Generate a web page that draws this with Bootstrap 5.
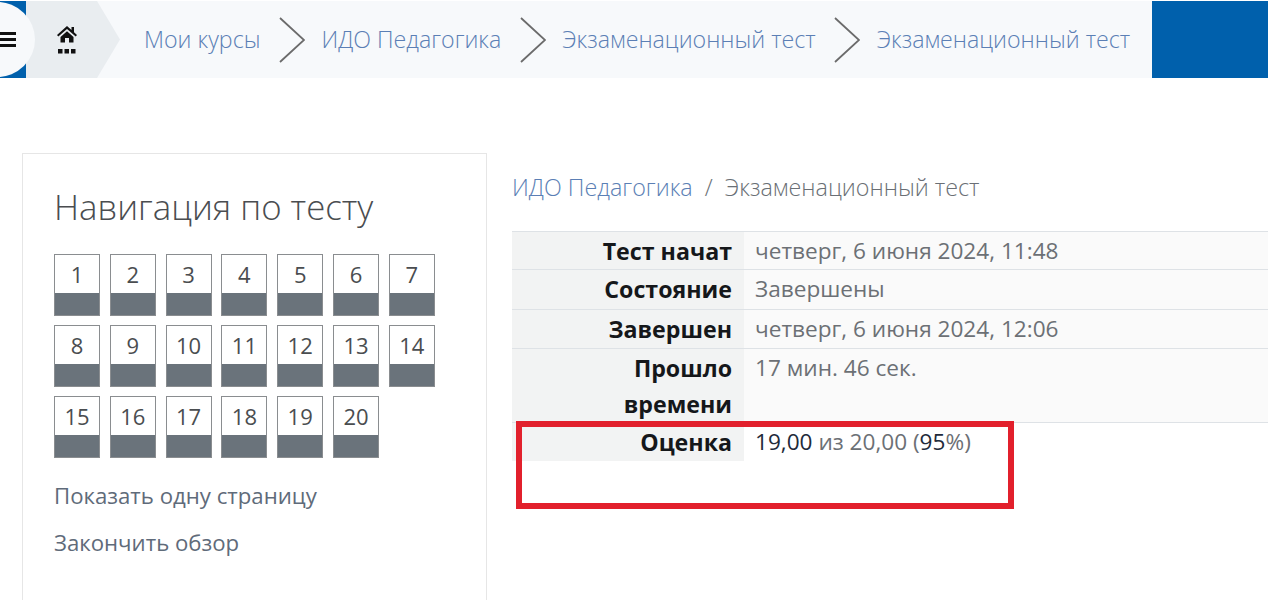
<!DOCTYPE html>
<html lang="ru">
<head>
<meta charset="utf-8">
<title>Экзаменационный тест</title>
<link href="https://cdn.jsdelivr.net/npm/bootstrap@5.3.0/dist/css/bootstrap.min.css" rel="stylesheet">
<style>
html,body{height:600px;overflow:hidden}
body{font-family:"Open Sans","Noto Sans",sans-serif;color:#373a3c;background:#fff}
.topbar{height:77px;margin-top:1px;background:#f7f9fb}
.topbar-end{width:116px;background:#0060ac;flex:none}
.menu-disc{width:26px;flex:none;background:#0060ac;position:relative;overflow:visible}
.menu-disc-inner{position:absolute;z-index:2;left:-41px;top:1px;width:76px;height:75px;border-radius:50%;background:#f7f9fb;display:flex;align-items:center;justify-content:flex-end;padding-right:19px}
.menu-icon{width:16px;height:15px}
.home-tab{width:94px;flex:none;padding-left:31px;background:#e9edf0;clip-path:polygon(0 0,71px 0,94px 50%,71px 100%,0 100%)}
.crumb-link{font-size:23.200px;font-weight:300;color:#5b7fb5;text-decoration:none;white-space:nowrap}
.chev{flex:none;margin-left:1px;margin-right:-1px}
.crumbs{padding-left:24px;gap:17.500px;min-width:0;overflow:hidden}
.content-wrap{padding:75px 0 0 22px;gap:25px}
.quiz-nav{width:465px;height:460px;flex:none;border:1px solid #e6e6e6;padding:30px 31px}
.quiz-title{font-size:34.800px;font-weight:300;line-height:46px;color:#4a4d50;margin:0 0 24px}
.qn-grid{display:grid;grid-template-columns:repeat(7,46px);column-gap:9.800px;row-gap:9px;margin-bottom:23px}
.qn-btn{height:62px;border:1px solid #8a8d90;background:#fff;font-size:22px;color:#4a4d50;display:flex;flex-direction:column;text-align:center}
.qn-btn span{height:38px;line-height:38px}
.qn-btn i{display:block;flex:1;background:#6a737b}
.nav-link-lite{display:block;font-size:22.200px;line-height:30px;color:#5f6b7a;text-decoration:none;margin-bottom:17px;font-weight:400}
.main-col{flex:1;min-width:0;position:relative}
.path-line{font-size:23.300px;line-height:30px;font-weight:300;margin:19px 0 29px;white-space:nowrap}
.path-line a{color:#5b7fb5;text-decoration:none}
.path-line span{color:#6a6f75}
.review{width:100%;border-collapse:collapse;table-layout:fixed}
.review tr.ruled{border-top:1px solid #dee2e6}
.review tr.last-ruled{border-bottom:1px solid #dee2e6}
.review th{width:232px;background:#f2f3f3;text-align:right;font-size:23.200px;font-weight:700;color:#15171a;padding:1px 12px 1px 40px;line-height:36px;vertical-align:top}
.review td{background:#fafafa;padding:1px 11px;font-size:22.600px;line-height:36px;color:#6c7075;vertical-align:top;font-weight:400}
.review tr.tight th,.review tr.tight td{padding-bottom:0}
.review tr.roomy th,.review tr.roomy td{padding-bottom:2px}
.review tr.plain td{background:#fff}
.review b{font-weight:400;color:#212a3a}
.red-frame{position:absolute;left:4px;top:268px;width:498px;height:88px;border:6px solid #e2202c;pointer-events:none}
</style>
</head>
<body>
<div class="topbar d-flex align-items-stretch">
  <div class="menu-disc"><div class="menu-disc-inner"><svg class="menu-icon" viewBox="0 0 16 15"><rect y="0" width="16" height="3" fill="#111"/><rect y="6" width="16" height="3" fill="#111"/><rect y="12" width="16" height="3" fill="#111"/></svg></div></div>
  <div class="home-tab d-flex align-items-center">
    <svg width="20" height="28" viewBox="0 0 20 28"><path d="M10 0 0 9l1.300 1.500L10 3l8.700 7.500L20 9l-3-2.700V1h-2.500v3.100z" fill="#111"/><path d="M3.500 11 10 5.200 16.500 11v5.500H12V12H8v4.500H3.500z" fill="#111"/><rect x="1" y="23" width="4.500" height="4.500" fill="#111"/><rect x="7.500" y="23" width="4.500" height="4.500" fill="#111"/><rect x="14" y="23" width="4.500" height="4.500" fill="#111"/></svg>
  </div>
  <div class="crumbs d-flex align-items-center flex-grow-1">
    <a class="crumb-link" href="#">Мои курсы</a>
    <svg class="chev" width="26" height="46" viewBox="0 0 26 46"><path d="M1 1l24 22L1 45" fill="none" stroke="#6b6b6b" stroke-width="1.800"/></svg>
    <a class="crumb-link" href="#">ИДО Педагогика</a>
    <svg class="chev" width="26" height="46" viewBox="0 0 26 46"><path d="M1 1l24 22L1 45" fill="none" stroke="#6b6b6b" stroke-width="1.800"/></svg>
    <a class="crumb-link" href="#">Экзаменационный тест</a>
    <svg class="chev" width="26" height="46" viewBox="0 0 26 46"><path d="M1 1l24 22L1 45" fill="none" stroke="#6b6b6b" stroke-width="1.800"/></svg>
    <a class="crumb-link" href="#">Экзаменационный тест</a>
  </div>
  <div class="topbar-end"></div>
</div>
<div class="content-wrap d-flex">
  <aside class="quiz-nav">
    <h2 class="quiz-title">Навигация по тесту</h2>
    <div class="qn-grid">
      <div class="qn-btn"><span>1</span><i></i></div>
      <div class="qn-btn"><span>2</span><i></i></div>
      <div class="qn-btn"><span>3</span><i></i></div>
      <div class="qn-btn"><span>4</span><i></i></div>
      <div class="qn-btn"><span>5</span><i></i></div>
      <div class="qn-btn"><span>6</span><i></i></div>
      <div class="qn-btn"><span>7</span><i></i></div>
      <div class="qn-btn"><span>8</span><i></i></div>
      <div class="qn-btn"><span>9</span><i></i></div>
      <div class="qn-btn"><span>10</span><i></i></div>
      <div class="qn-btn"><span>11</span><i></i></div>
      <div class="qn-btn"><span>12</span><i></i></div>
      <div class="qn-btn"><span>13</span><i></i></div>
      <div class="qn-btn"><span>14</span><i></i></div>
      <div class="qn-btn"><span>15</span><i></i></div>
      <div class="qn-btn"><span>16</span><i></i></div>
      <div class="qn-btn"><span>17</span><i></i></div>
      <div class="qn-btn"><span>18</span><i></i></div>
      <div class="qn-btn"><span>19</span><i></i></div>
      <div class="qn-btn"><span>20</span><i></i></div>
    </div>
    <a class="nav-link-lite" href="#">Показать одну страницу</a>
    <a class="nav-link-lite" href="#">Закончить обзор</a>
  </aside>
  <main class="main-col">
    <div class="path-line"><a href="#">ИДО Педагогика</a><span> &nbsp;/&nbsp; Экзаменационный тест</span></div>
    <table class="review">
      <tr class="ruled tight"><th>Тест начат</th><td>четверг, 6 июня 2024, 11:48</td></tr>
      <tr class="ruled roomy"><th>Состояние</th><td>Завершены</td></tr>
      <tr class="ruled"><th>Завершен</th><td>четверг, 6 июня 2024, 12:06</td></tr>
      <tr class="ruled last-ruled tight"><th>Прошло времени</th><td>17 мин. 46 сек.</td></tr>
      <tr class="plain"><th>Оценка</th><td><b>19,00</b> из 20,00 (<b>95</b>%)</td></tr>
    </table>
    <div class="red-frame"></div>
  </main>
</div>
</body>
</html>
